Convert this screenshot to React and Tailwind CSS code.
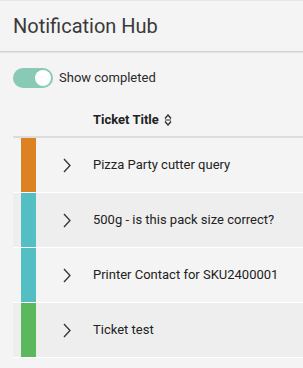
import React, { useState } from 'react';

const tickets = [
  { id: 1, title: 'Pizza Party cutter query', color: 'bg-[#dc8223]', bg: 'bg-[#f4f4f4]' },
  { id: 2, title: '500g - is this pack size correct?', color: 'bg-[#53bec4]', bg: 'bg-[#eeeeee]' },
  { id: 3, title: 'Printer Contact for SKU2400001', color: 'bg-[#53bec4]', bg: 'bg-[#f4f4f4]' },
  { id: 4, title: 'Ticket test', color: 'bg-[#5cb85c]', bg: 'bg-[#eeeeee]' },
];

function Chevron() {
  return (
    <svg width="8" height="15" viewBox="0 0 8 15" fill="none">
      <path d="M1 1l6 6.5-6 6.5" stroke="#333" strokeWidth="1.3" />
    </svg>
  );
}

function SortIcon() {
  return (
    <svg width="8" height="12" viewBox="0 0 8 12" fill="none">
      <path d="M1 4.5l3-3.5L7 4.5" stroke="#333" strokeWidth="1.4" />
      <path d="M1 7.5l3 3.5L7 7.5" stroke="#333" strokeWidth="1.4" />
      <path d="M1 6h6" stroke="#333" strokeWidth="1" />
    </svg>
  );
}

export default function App() {
  const [showCompleted, setShowCompleted] = useState(true);

  return (
    <div className="min-h-[368px] bg-[#f4f4f4] font-['Roboto',sans-serif] text-[#222]">
      <div className="h-[52px] border-t border-[#e6e6e6] border-b border-b-[#d2d2d2] shadow-[0_1px_1px_rgba(0,0,0,0.06)] flex items-center px-[13px]">
        <div className="text-[20px] text-[#3a3a3a] leading-none">Notification Hub</div>
      </div>

      <div className="px-[13px] pt-[16px] flex items-center gap-[6px]">
        <button
          onClick={() => setShowCompleted(!showCompleted)}
          className="w-[40px] h-[20px] rounded-full bg-[#89cab6] flex items-center justify-end px-[2px]"
        >
          <span className="w-[16px] h-[16px] rounded-full bg-white block" />
        </button>
        <span className="text-[13px] text-[#2a2a2a]">Show completed</span>
      </div>

      <div className="ml-[13px] mt-[16px]">
        <div className="h-[34px] border-b-2 border-[#dcdcdc] flex items-center">
          <div className="pl-[80px] flex items-center gap-[5px] text-[13px] font-bold text-[#222]">
            Ticket Title
            <SortIcon />
          </div>
        </div>
        {tickets.map((t) => (
          <div key={t.id} className={`h-[55px] border-b border-white flex items-stretch ${t.bg}`}>
            <div className="w-[8px]" />
            <div className={`w-[15px] ${t.color}`} />
            <div className="pl-[27px] flex items-center">
              <Chevron />
            </div>
            <div className="pl-[22px] flex items-center text-[13px] text-[#222]">{t.title}</div>
          </div>
        ))}
      </div>
    </div>
  );
}
